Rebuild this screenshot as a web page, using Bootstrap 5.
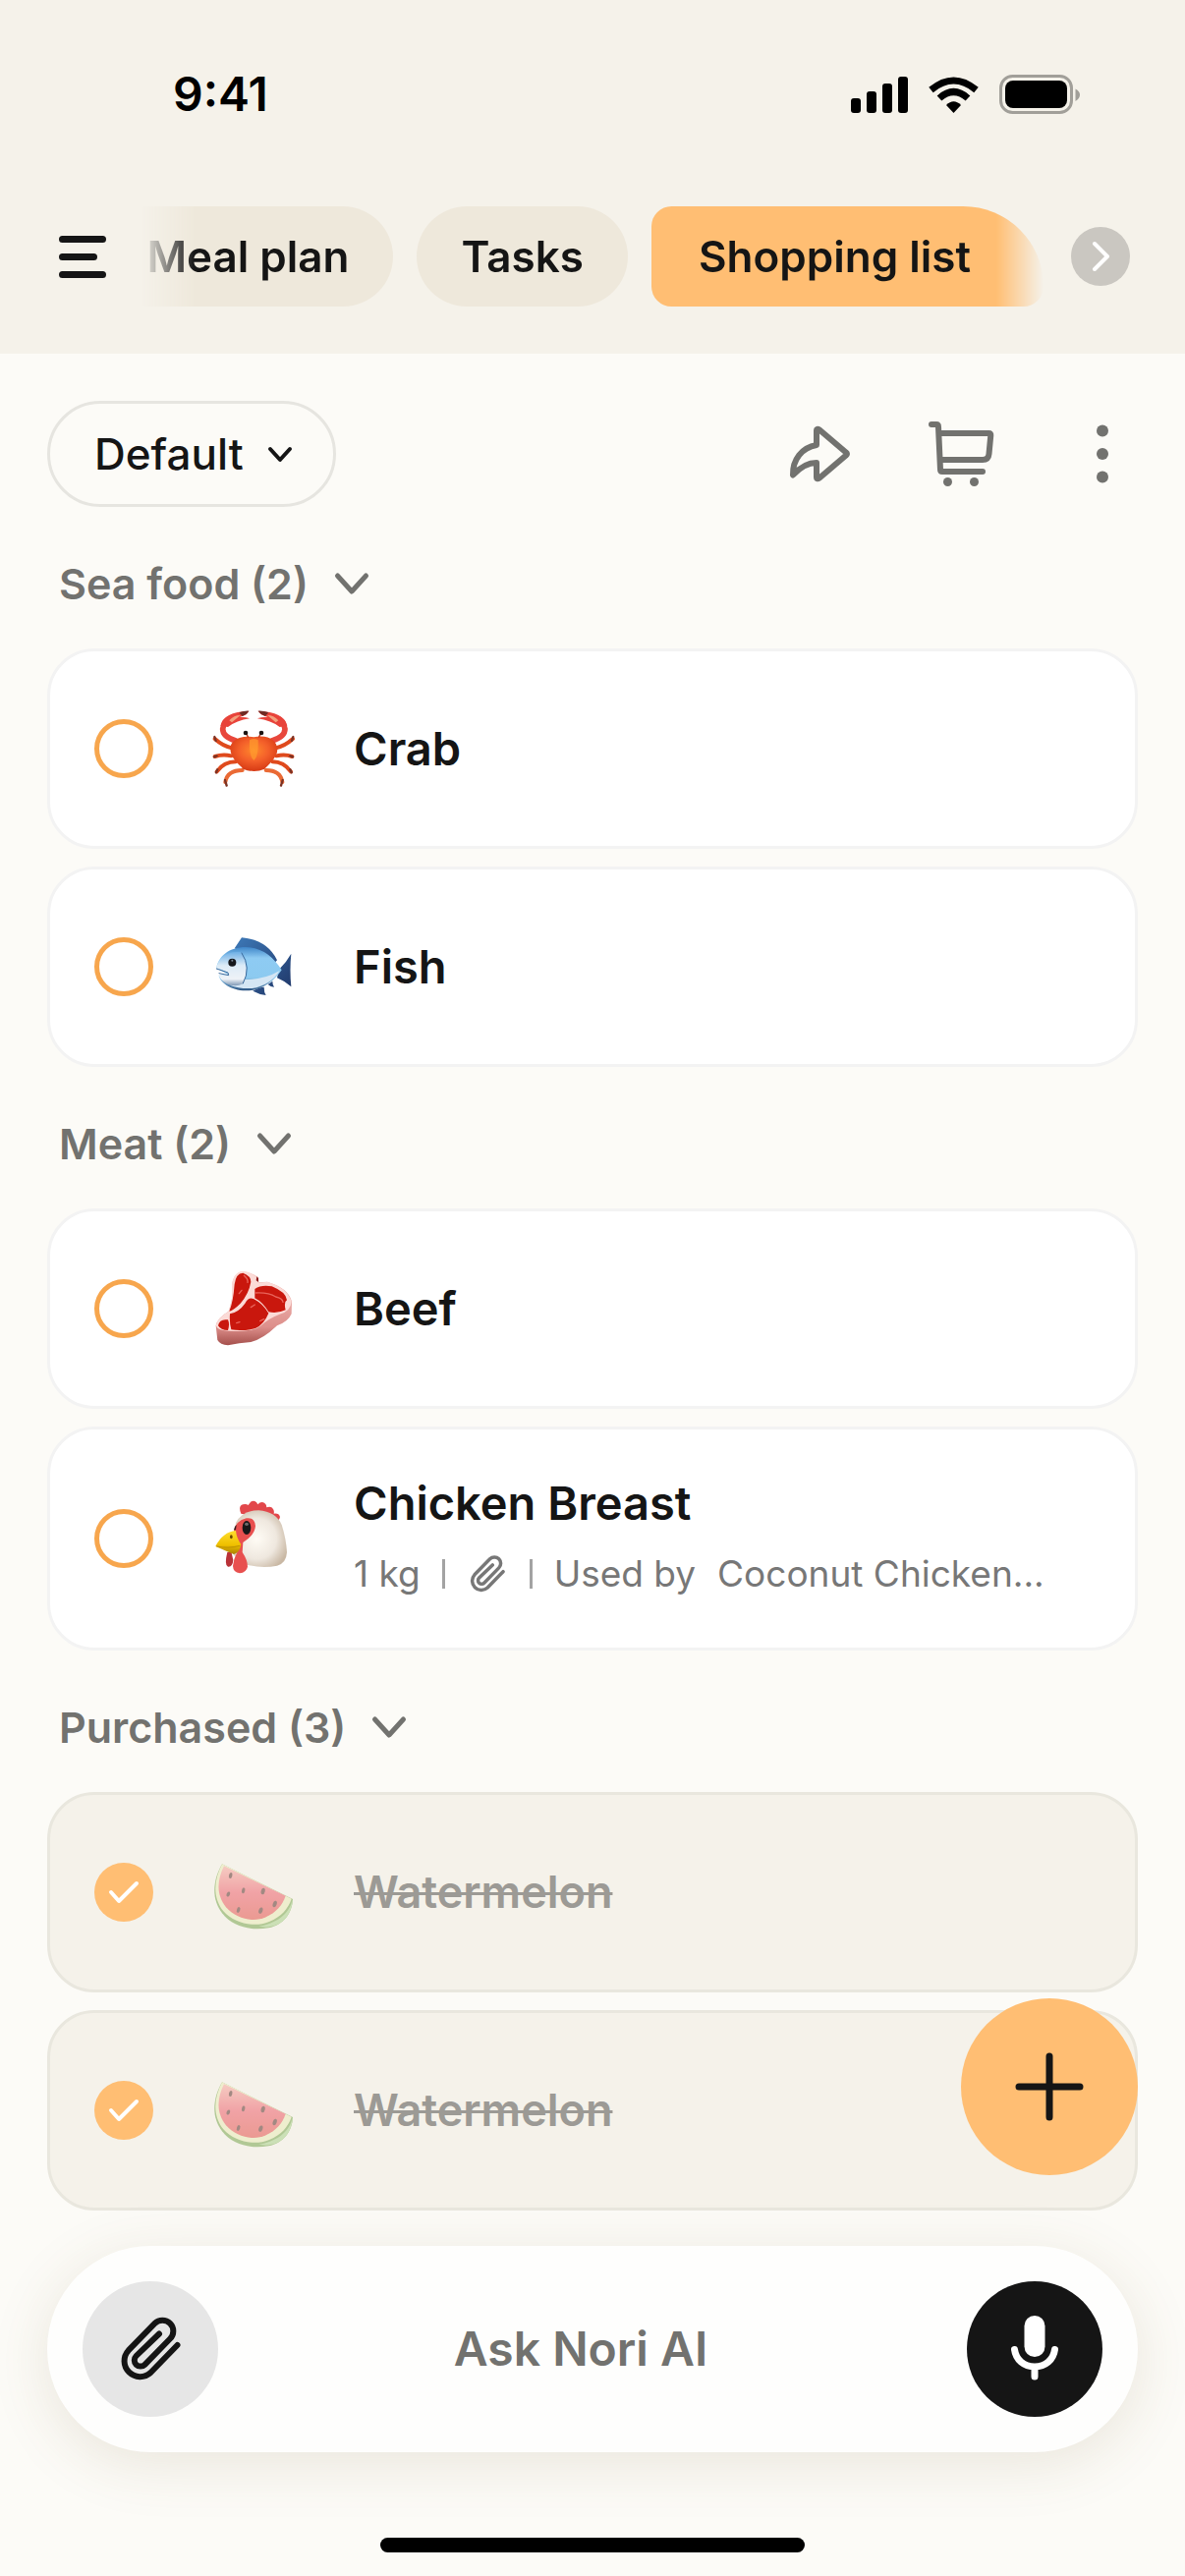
<!DOCTYPE html>
<html lang="en">
<head>
<meta charset="utf-8">
<meta name="viewport" content="width=device-width, initial-scale=1">
<title>Shopping list</title>
<link href="https://cdn.jsdelivr.net/npm/bootstrap@5.3.0/dist/css/bootstrap.min.css" rel="stylesheet">
<style>
  :root { --ink: #151515; --muted: #72726f; --sand: #f5f2ea; --paper: #fcfbf7; --accent: #ffbe73; }
  body { background: var(--paper); color: var(--ink); font-family: Inter, "Liberation Sans", sans-serif; font-size: 44px; line-height: 60px; }
  svg { display: block; flex: none; fill: none; stroke: currentColor; stroke-linecap: round; stroke-linejoin: round; }
  .app-head { background: var(--sand); }
  .status-row { height: 192px; padding: 0 107px 0 176px; }
  .status-icons { gap: 21px; }
  .clock { font-size: 48px; font-weight: 600; color: #000; }
  .tab-row { padding: 18px 56px 48px 60px; }
  .bare-btn { background: none; border: 0; padding: 0; color: inherit; }
  .tab-strip { height: 102px; margin: 0 28px 0 36px; min-width: 0; overflow: hidden; flex-wrap: nowrap; gap: 24px;
    -webkit-mask-image: linear-gradient(90deg, transparent, #000 54px, #000 calc(100% - 48px), transparent);
    mask-image: linear-gradient(90deg, transparent, #000 54px, #000 calc(100% - 48px), transparent); }
  .tab-strip .nav-link { flex: none; height: 102px; padding: 21px 45px; border-radius: 51px; background: #eee8db; color: var(--ink); font-weight: 600; font-size: 44px; white-space: nowrap; }
  .tab-strip .nav-link.active { background: var(--accent); border-radius: 24px 96px 24px 24px; padding-left: 48px; padding-right: 74px; color: var(--ink); }
  .next-btn { width: 60px; height: 60px; border-radius: 50%; background: #cac7c1; color: #fff; }
  .page-x { padding-left: 48px; padding-right: 48px; }
  .tools { padding-top: 48px; color: var(--muted); }
  .list-picker { width: 294px; height: 108px; border: 3px solid #e6e5e0; border-radius: 54px; padding: 0 84px 0 45px; font-size: 44px; font-weight: 500; line-height: 60px; color: var(--ink); background-color: transparent;
    background-size: 36px 36px; background-position: right 36px center;
    --bs-form-select-bg-img: url("data:image/svg+xml,%3csvg xmlns='http://www.w3.org/2000/svg' viewBox='0 0 36 36'%3e%3cpath fill='none' stroke='%23151515' stroke-width='4' stroke-linecap='round' stroke-linejoin='round' d='M8 13l10 11 10-11'/%3e%3c/svg%3e"); }
  .tool-icons { gap: 72px; }
  .group-head { padding: 48px 12px 36px; gap: 20px; color: var(--muted); font-size: 43px; font-weight: 600; line-height: 60px; margin: 0; }
  .items { gap: 18px; }
  .item { min-height: 204px; border: 3px solid #f3f3f3; border-radius: 48px; background: #fff; padding: 45px; gap: 48px; }
  .item .form-check-input { width: 60px; height: 60px; margin: 0; flex: none; border: 5px solid #f7a64d; background-color: #fff; }
  .item .form-check-input:checked { border: 0; background-color: var(--accent); background-size: 60px 60px;
    --bs-form-check-bg-image: url("data:image/svg+xml,%3csvg xmlns='http://www.w3.org/2000/svg' viewBox='0 0 60 60'%3e%3cpath fill='none' stroke='%23fff' stroke-width='4' stroke-linecap='round' stroke-linejoin='round' d='M17 30l8 9 18-18'/%3e%3c/svg%3e"); }
  .item .item-name { font-size: 47px; font-weight: 600; line-height: 60px; }
  .item .pic { stroke: none; width: 108px; height: 108px; }
  .item-done { background: var(--sand); border-color: #e9e7de; }
  .item-done .item-name { color: #9c9a95; text-decoration: line-through; text-decoration-thickness: 3px; font-size: 45px; }
  .item-done .pic { opacity: .5; }
  .details { font-size: 37px; line-height: 60px; margin-top: 12px; gap: 22px; color: #777; }
  .rule { width: 3px; height: 30px; background: #a3a3a3; }
  .dock { padding-top: 36px; padding-bottom: 24px; }
  .ask { padding: 36px; border-radius: 105px; background: #fefefd; box-shadow: 0 12px 60px rgba(110, 85, 40, .13); }
  .ask .round-btn { width: 138px; height: 138px; border-radius: 50%; flex: none; }
  .clip-btn { background: #e6e6e6; color: var(--ink); }
  .mic-btn { background: var(--ink); color: #fff; }
  .ask .form-control { border: 0; background: none; padding: 6px 36px 6px 12px; font-size: 48px; font-weight: 600; line-height: 60px; color: var(--ink); min-width: 0; }
  .ask .form-control::placeholder { color: var(--muted); opacity: 1; }
  .add-btn { position: absolute; right: 48px; bottom: calc(100% + 36px); width: 180px; height: 180px; border-radius: 50%; background: var(--accent); color: var(--ink); }
  .home-bar { width: 432px; height: 15px; border-radius: 8px; background: #000; margin-top: 87px; }
</style>
</head>
<body>
<svg width="0" height="0" class="position-absolute" aria-hidden="true">
  <defs>
    <symbol id="clip" viewBox="0 0 72 72"><path stroke-width="6" d="M63.5 32L36.3 60A16 16 0 0 1 13.7 37.4L40.5 9.9A11 11 0 0 1 56.1 25.5L30.4 51.8A6.2 6.2 0 0 1 21.6 43L45 20.5"/></symbol>
    <symbol id="chev" viewBox="0 0 48 48"><path stroke-width="5" d="M9.500 16L24 32l14.500-16"/></symbol>
    <linearGradient id="melonFlesh" x1="0" y1="0" x2="0" y2="1"><stop offset="0" stop-color="#f6a59a"/><stop offset=".5" stop-color="#ee5563"/><stop offset="1" stop-color="#e2443c"/></linearGradient>
    <symbol id="melon" viewBox="522 486 324 324">
      <path fill="#6fa043" d="M588 562C560 610 554 668 588 712C622 756 680 766 730 757C776 748 802 712 804 669Z"/>
      <path fill="#a3cf83" d="M800 680C790 715 752 744 700 752C760 764 800 726 804 669Z"/>
      <path fill="#e9ecb4" d="M588 562C563 610 558 664 592 706C628 746 690 756 732 738C770 722 790 698 800 668Z"/>
      <path fill="url(#melonFlesh)" d="M594 568C572 612 570 656 600 694C632 730 684 742 722 724C754 708 772 688 782 659Z"/>
      <g fill="#51231d"><ellipse cx="614" cy="597" rx="5" ry="9" transform="rotate(14 614 597)"/><ellipse cx="653" cy="643" rx="5" ry="9" transform="rotate(14 653 643)"/><ellipse cx="713" cy="645" rx="6" ry="10" transform="rotate(14 713 645)"/><ellipse cx="607" cy="654" rx="5" ry="8" transform="rotate(25 607 654)"/><ellipse cx="638" cy="702" rx="5" ry="9" transform="rotate(18 638 702)"/><ellipse cx="706" cy="704" rx="6" ry="10" transform="rotate(18 706 704)"/><ellipse cx="749" cy="684" rx="6" ry="10" transform="rotate(18 749 684)"/></g>
    </symbol>
    <radialGradient id="crabShell" cx=".5" cy=".4" r=".6"><stop offset="0" stop-color="#ff8a2c"/><stop offset=".5" stop-color="#f4602a"/><stop offset="1" stop-color="#d63a14"/></radialGradient>
    <linearGradient id="fishBody" x1="0" y1="0" x2="0" y2="1"><stop offset="0" stop-color="#3f86c9"/><stop offset=".25" stop-color="#8ecbf3"/><stop offset=".7" stop-color="#8ccaf0"/><stop offset="1" stop-color="#2d5482"/></linearGradient>
    <linearGradient id="fishFin" x1="0" y1="0" x2="1" y2="1"><stop offset="0" stop-color="#3d79b8"/><stop offset="1" stop-color="#1f3566"/></linearGradient>
    <linearGradient id="fishHead" x1="0" y1="0" x2="0" y2="1"><stop offset="0" stop-color="#6fb0e6"/><stop offset=".4" stop-color="#dcebf7"/><stop offset=".8" stop-color="#eef2f7"/><stop offset="1" stop-color="#7f98b5"/></linearGradient>
    <linearGradient id="fatEdge" x1="0" y1="0" x2="0" y2="1"><stop offset="0" stop-color="#f8c9c4"/><stop offset=".75" stop-color="#dd8f8b"/><stop offset="1" stop-color="#a5504c"/></linearGradient>
    <radialGradient id="henHead" cx=".45" cy=".5" r=".6"><stop offset="0" stop-color="#fffcf5"/><stop offset=".6" stop-color="#efe8df"/><stop offset="1" stop-color="#c9b8a4"/></radialGradient>
    <linearGradient id="beak" x1="0" y1="0" x2="0" y2="1"><stop offset="0" stop-color="#ffdf2e"/><stop offset=".6" stop-color="#efc000"/><stop offset="1" stop-color="#a87f00"/></linearGradient>
  </defs>
</svg>

<header class="app-head">
  <div class="status-row d-flex align-items-center justify-content-between">
    <span class="clock">9:41</span>
    <div class="status-icons d-flex align-items-center text-black">
      <svg width="58" height="37" viewBox="0 0 58 37" aria-hidden="true"><g fill="#000" stroke="none"><rect y="22" width="10" height="15" rx="3"/><rect x="16" y="15" width="10" height="22" rx="3"/><rect x="32" y="7" width="10" height="30" rx="3"/><rect x="48" width="10" height="37" rx="3"/></g></svg>
      <svg width="51" height="37" viewBox="0 0 51 37" aria-hidden="true"><g stroke-linecap="butt"><path stroke-width="7" d="M2.500 13.500Q25.500-5.500 48.500 13.500M11 22Q25.500 9 40 22"/></g><path fill="#000" stroke="none" d="M18 29Q25.500 21.500 33 29L25.500 37Z"/></svg>
      <svg width="82" height="40" viewBox="0 0 82 40" aria-hidden="true"><rect x="1.500" y="1.500" width="72" height="37" rx="12" stroke="#a19f99" stroke-width="3"/><rect x="6" y="6" width="63" height="28" rx="8" fill="#000" stroke="none"/><path fill="#a19f99" stroke="none" d="M77.500 14.500Q82 17 82 20.500T77.500 27Z"/></svg>
    </div>
  </div>
  <div class="tab-row d-flex align-items-center">
    <button class="bare-btn" type="button" aria-label="Menu"><svg width="48" height="72" viewBox="0 0 48 72" stroke-width="7"><path d="M3.500 18.500h41M3.500 36.500h32M3.500 54.500h41"/></svg></button>
    <nav class="tab-strip nav flex-fill justify-content-end" aria-label="Sections">
      <a class="nav-link" href="#">Meal plan</a>
      <a class="nav-link" href="#">Tasks</a>
      <a class="nav-link active" aria-current="page" href="#">Shopping list</a>
    </nav>
    <button class="bare-btn next-btn" type="button" aria-label="Next"><svg width="60" height="60" viewBox="0 0 60 60" stroke-width="4"><path d="M24 17l13 13-13 13"/></svg></button>
  </div>
</header>

<main class="page-x">
  <div class="tools d-flex align-items-center justify-content-between">
    <select class="form-select list-picker" aria-label="List"><option>Default</option></select>
    <div class="tool-icons d-flex">
      <button class="bare-btn" type="button" aria-label="Share"><svg width="72" height="72" viewBox="0 0 72 72" stroke-width="6"><path d="M33 27V12.500Q33 9.500 36 11.500L63 34.500Q65 36 63 37.500L36 60.500Q33 62.500 33 59.500V45C24 45 16 50 9 57.500C8.500 42 18 29.500 33 27Z"/></svg></button>
      <button class="bare-btn" type="button" aria-label="Cart"><svg width="72" height="72" viewBox="0 0 72 72" stroke-width="6"><path d="M6 6h5Q13 6 13 8.500L15 52Q15 54 17 54H58M13.500 15H64.500Q66.500 15 66.300 17L64.500 36Q64 42 58 42H15"/><g fill="currentColor" stroke="none"><circle cx="22.500" cy="64.500" r="4.500"/><circle cx="49.500" cy="64.500" r="4.500"/></g></svg></button>
      <button class="bare-btn" type="button" aria-label="More"><svg width="72" height="72" viewBox="0 0 72 72"><g fill="currentColor" stroke="none"><circle cx="36" cy="12.500" r="6"/><circle cx="36" cy="36" r="6"/><circle cx="36" cy="59.500" r="6"/></g></svg></button>
    </div>
  </div>

  <section>
    <h2 class="group-head d-flex align-items-center">Sea food (2) <svg width="48" height="48"><use href="#chev"/></svg></h2>
    <div class="items d-flex flex-column">
      <label class="item d-flex align-items-center">
        <input class="form-check-input rounded-circle" type="checkbox">
        <svg class="pic" viewBox="522 54 324 324" aria-hidden="true">
          <g fill="none" stroke="#df4a1d" stroke-width="12"><path d="M618 214Q590 208 566 186M752 214Q780 208 804 186M616 238Q590 232 566 240M754 238Q780 232 802 240M630 256Q594 256 572 286M742 256Q776 256 798 286"/><path stroke="#ea6a35" d="M650 282Q604 282 598 318M722 282Q766 282 772 318"/></g>
          <g fill="none" stroke="#7c3324" stroke-width="7"><path d="M565 180l4 12M805 180l-4 12M564 241l8-3M804 241l-8-3M570 289l4-9M800 289l-4-9M597 312l5 17M773 312l-5 17"/></g>
          <g fill="none" stroke="#e8473c" stroke-width="17"><path d="M630 192Q590 180 590 156Q594 134 608 126M740 192Q780 180 780 156Q776 134 762 126"/></g>
          <path fill="#e8433a" d="M583 146Q592 104 670 101Q664 114 642 119Q664 120 672 124Q632 130 606 150ZM787 146Q778 104 698 101Q706 114 728 119Q704 120 696 124Q738 130 764 150Z"/>
          <path fill="#f2a17d" d="M610 130Q624 114 644 114L618 136ZM760 130Q746 114 726 114L752 136Z"/>
          <path fill="#6f2c25" d="M640 106Q655 100 670 101Q664 112 650 117ZM730 106Q715 100 698 101Q706 112 720 117Z"/>
          <path fill="url(#crabShell)" d="M685 181C730 172 756 192 757 218C757 244 726 268 718 278Q686 292 652 278C642 264 614 248 613 216C614 190 642 174 685 181Z"/>
          <path fill="#ff9c2e" opacity=".7" d="M672 190Q685 182 698 190Q700 240 685 252Q670 240 672 190Z"/>
          <g fill="none" stroke="#b52f17" stroke-width="4"><path d="M667 180l-5-10M701 180l5-10"/></g>
          <circle cx="660" cy="168" r="7" fill="#1b1513"/><circle cx="708" cy="168" r="7" fill="#1b1513"/>
        </svg>
        <span class="item-name">Crab</span>
      </label>
      <label class="item d-flex align-items-center">
        <input class="form-check-input rounded-circle" type="checkbox">
        <svg class="pic" viewBox="522 720 324 324" aria-hidden="true">
          <path fill="url(#fishFin)" d="M626 826L648 793Q726 800 756 862L740 880ZM762 890Q786 866 799 842Q794 892 799 943Q780 926 756 916ZM682 956Q702 944 716 944Q716 960 722 969Q700 966 682 956ZM728 936L742 926Q742 938 747 944Q736 944 728 936Z"/>
          <path fill="url(#fishBody)" d="M571 886C576 850 610 822 660 822C712 824 744 852 770 892C744 930 706 956 660 955C614 954 582 930 578 908L608 907Z"/>
          <path fill="#d5e6f4" d="M640 920Q710 926 764 894Q734 940 680 948Q640 950 612 938Z"/>
          <path fill="url(#fishHead)" d="M571 886C576 856 604 832 646 838C666 862 668 904 652 934C620 950 586 930 578 908L608 907Q606 896 571 886Z"/>
          <path fill="none" stroke="#39699c" stroke-width="3" d="M648 840Q678 884 652 933M571 888L606 900 608 908 579 902"/>
          <circle cx="619" cy="869" r="12" fill="#15171c"/><circle cx="619" cy="863" r="3" fill="#7c8997"/>
        </svg>
        <span class="item-name">Fish</span>
      </label>
    </div>
  </section>

  <section>
    <h2 class="group-head d-flex align-items-center">Meat (2) <svg width="48" height="48"><use href="#chev"/></svg></h2>
    <div class="items d-flex flex-column">
      <label class="item d-flex align-items-center">
        <input class="form-check-input rounded-circle" type="checkbox">
        <svg class="pic" viewBox="522 174 324 324" aria-hidden="true">
          <path fill="url(#fatEdge)" d="M569 388Q574 364 608 344Q624 300 618 266Q622 226 650 222Q682 226 698 240L700 256L726 254Q790 272 801 314L800 352Q790 376 756 388Q712 430 676 438Q640 440 606 448Q582 446 574 432Z"/>
          <path fill="#fbdbd7" d="M569 388Q574 364 608 344Q624 300 618 266Q622 226 650 222Q682 226 696 244L700 258L726 254Q786 272 800 314Q798 344 762 354Q730 366 704 390Q680 408 610 404Q576 404 569 388Z"/>
          <path fill="#c9170d" d="M626 262Q630 228 652 227Q676 236 676 254Q670 290 644 320Q622 342 610 344Q622 316 626 262ZM688 276Q708 262 740 268Q784 286 786 310Q776 316 782 340Q756 352 730 346Q712 316 688 304ZM612 352Q640 346 658 320Q668 300 684 306Q712 320 730 350Q716 384 690 396Q650 406 616 400Q610 380 612 352ZM576 388Q580 366 606 370Q612 384 606 402Q584 402 576 388Z"/>
          <path fill="none" stroke="#e8635a" stroke-width="4" d="M655 235Q668 246 666 256M690 288Q730 286 752 300Q772 304 774 316M640 290l8-10M676 332l12-8M632 380l10-3M704 374l12-6"/>
          <path fill="#8f1b1b" d="M694 238l5 5v12l-7-5Z"/>
        </svg>
        <span class="item-name">Beef</span>
      </label>
      <div class="item d-flex align-items-center">
        <input class="form-check-input rounded-circle" type="checkbox" id="hen">
        <svg class="pic" viewBox="522 876 324 324" aria-hidden="true">
          <path fill="#e2474b" d="M646 962Q636 938 652 934Q662 932 668 936Q676 920 688 924Q694 926 697 934Q708 922 718 930Q724 934 724 943Q738 938 744 948Q748 954 746 962Q762 960 765 972Q764 980 758 984Z"/>
          <path fill="#b93238" d="M604 1080Q594 1120 606 1124Q620 1126 622 1104L616 1078Z"/>
          <path fill="url(#henHead)" d="M630 990Q650 952 700 952Q752 956 770 996Q784 1040 786 1080Q784 1114 756 1121Q710 1130 664 1118Q628 1104 618 1076Z"/>
          <path fill="#e8504f" d="M624 1014Q630 984 662 976Q688 972 690 1000Q688 1028 652 1050L650 1080Q666 1104 666 1124Q662 1142 642 1144Q622 1142 621 1122Q624 1098 634 1080Z"/>
          <path fill="#3a1c1c" d="M624 1012q2-12 8-16l-2 16Z"/>
          <path fill="url(#beak)" d="M568 1062Q590 1018 630 1014Q632 1036 646 1056Q642 1080 624 1086Q600 1076 568 1062Z"/>
          <path fill="none" stroke="#a87f00" stroke-width="2" d="M572 1062Q606 1070 642 1060"/>
          <ellipse cx="616" cy="1033" rx="4" ry="6" fill="#6b4b00"/>
          <ellipse cx="663" cy="1005" rx="13" ry="21" fill="#1a1718"/><ellipse cx="663" cy="994" rx="6" ry="5" fill="#6d6b6c"/>
        </svg>
        <div class="flex-fill">
          <label class="item-name d-block" for="hen">Chicken Breast</label>
          <div class="details d-flex align-items-center text-nowrap">
            <span>1 kg</span><span class="rule"></span><svg width="42" height="42" aria-hidden="true"><use href="#clip"/></svg><span class="rule"></span><span>Used by</span><span>Coconut Chicken...</span>
          </div>
        </div>
      </div>
    </div>
  </section>

  <section>
    <h2 class="group-head d-flex align-items-center">Purchased (3) <svg width="48" height="48"><use href="#chev"/></svg></h2>
    <div class="items d-flex flex-column">
      <label class="item item-done d-flex align-items-center">
        <input class="form-check-input rounded-circle" type="checkbox" checked>
        <svg class="pic" aria-hidden="true"><use href="#melon"/></svg>
        <span class="item-name">Watermelon</span>
      </label>
      <label class="item item-done d-flex align-items-center">
        <input class="form-check-input rounded-circle" type="checkbox" checked>
        <svg class="pic" aria-hidden="true"><use href="#melon"/></svg>
        <span class="item-name">Watermelon</span>
      </label>
    </div>
  </section>
</main>

<footer class="dock page-x position-relative">
  <form class="ask d-flex align-items-center">
    <button class="bare-btn round-btn clip-btn d-flex align-items-center justify-content-center" type="button" aria-label="Attach"><svg width="72" height="72"><use href="#clip"/></svg></button>
    <input class="form-control flex-fill text-center" type="text" placeholder="Ask Nori AI" aria-label="Ask Nori AI">
    <button class="bare-btn round-btn mic-btn d-flex align-items-center justify-content-center" type="button" aria-label="Speak"><svg width="72" height="72" viewBox="0 0 72 72"><rect x="25.500" y="2" width="21" height="42" rx="10.500" fill="#fff" stroke="none"/><path stroke-width="7" d="M15.500 36.500C17 47 25 54 36 54S55 47 56.500 36.500M36 54V64"/></svg></button>
  </form>
  <div class="home-bar mx-auto"></div>
  <button class="bare-btn add-btn d-flex align-items-center justify-content-center" type="button" aria-label="Add item"><svg width="72" height="72" viewBox="0 0 72 72" stroke-width="7"><path d="M36 5v62M5 36h62"/></svg></button>
</footer>
<script src="https://cdn.jsdelivr.net/npm/bootstrap@5.3.0/dist/js/bootstrap.bundle.min.js"></script>
</body>
</html>
